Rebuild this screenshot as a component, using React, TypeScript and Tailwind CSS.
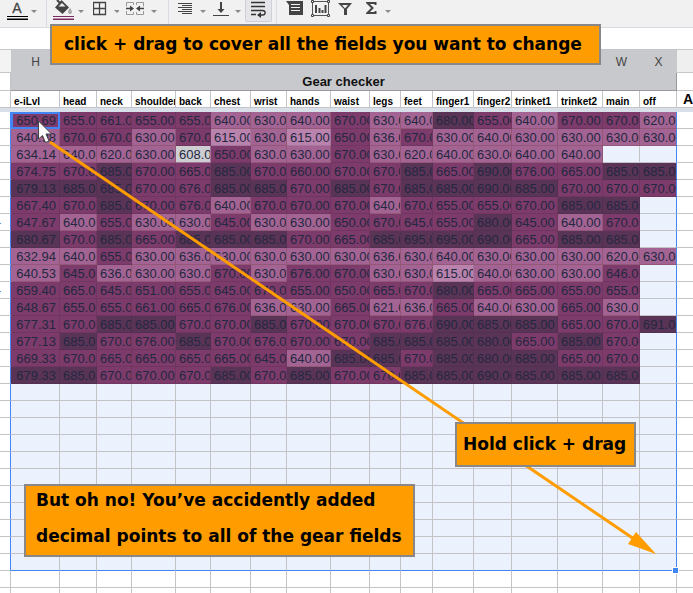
import type { ReactNode } from 'react'
import clsx from 'clsx'

const columns = [
    { label: 'e-iLvl', letter: 'H', width: 'w-[49px]' },
    { label: 'head', width: 'w-[37px]' },
    { label: 'neck', width: 'w-[35px]' },
    { label: 'shoulder', width: 'w-[44px]' },
    { label: 'back', width: 'w-[35px]' },
    { label: 'chest', width: 'w-[40px]' },
    { label: 'wrist', width: 'w-[36px]' },
    { label: 'hands', width: 'w-[44px]' },
    { label: 'waist', width: 'w-[39px]' },
    { label: 'legs', width: 'w-[31px]' },
    { label: 'feet', width: 'w-[32px]' },
    { label: 'finger1', width: 'w-[41px]' },
    { label: 'finger2', width: 'w-[38px]' },
    { label: 'trinket1', width: 'w-[46px]' },
    { label: 'trinket2', width: 'w-[45px]' },
    { label: 'main', letter: 'W', width: 'w-[37px]' },
    { label: 'off', letter: 'X', width: 'w-[37px]' },
]

const gear: number[][] = [
    [650.69, 655, 661, 655, 655, 640, 630, 640, 670, 630, 640, 680, 655, 640, 670, 670, 620],
    [640.98, 670, 670, 630, 670, 615, 630, 615, 650, 636, 670, 630, 640, 630, 630, 630, 630],
    [634.14, 640, 620, 630, 608, 650, 630, 630, 670, 630, 620, 640, 630, 640, 640],
    [674.75, 670, 685, 670, 665, 685, 670, 660, 670, 670, 685, 665, 690, 676, 665, 685, 685],
    [679.13, 685, 685, 670, 676, 685, 685, 670, 685, 670, 685, 685, 690, 685, 670, 670, 670],
    [667.4, 670, 685, 670, 676, 640, 670, 670, 670, 640, 670, 655, 655, 670, 685, 685],
    [647.67, 640, 655, 630, 630, 645, 630, 630, 650, 670, 645, 655, 680, 645, 640, 670],
    [680.67, 670, 685, 665, 685, 685, 685, 670, 665, 685, 695, 695, 690, 665, 685, 685],
    [632.94, 640, 655, 630, 636, 630, 630, 630, 630, 636, 630, 640, 630, 630, 630, 620, 630],
    [640.53, 645, 636, 630, 630, 670, 630, 676, 670, 630, 630, 615, 640, 630, 630, 646],
    [659.4, 665, 645, 651, 655, 645, 670, 655, 650, 665, 670, 680, 665, 665, 655, 655],
    [648.67, 655, 655, 661, 665, 676, 636, 630, 665, 621, 636, 665, 640, 630, 665, 630],
    [677.31, 670, 685, 685, 670, 670, 685, 670, 670, 670, 676, 690, 685, 685, 665, 670, 691],
    [677.13, 685, 670, 676, 685, 670, 676, 670, 670, 685, 685, 685, 680, 665, 685, 670],
    [669.33, 670, 665, 665, 665, 665, 645, 640, 685, 685, 670, 685, 680, 685, 665, 670],
    [679.33, 685, 670, 670, 670, 685, 670, 685, 670, 670, 685, 685, 690, 685, 685, 685],
]

const SELECTED_ROWS = 27
const rows = Array.from({ length: 29 }, (_, i) => gear[i] ?? [])

function cellColor(value?: number) {
    if (value === undefined) return 'bg-[#ebf2fe] border-[#c4c4c8]'
    if (value >= 679) return 'bg-[#5a3457] border-[#523052]'
    if (value >= 641) return 'bg-[#7c3b6a] border-[#703660]'
    if (value >= 620) return 'bg-[#a36494] border-[#935878]'
    if (value >= 610) return 'bg-[#b983ae] border-[#a5749a]'
    return 'bg-[#cdced2] border-[#a5749a]'
}

interface ToolProps {
    label: string
    className: string
    viewBox: string
    width: number
    children: ReactNode
}

function Tool({ label, className, viewBox, width, children }: ToolProps) {
    return (
        <button type="button" aria-label={label} className={clsx('shrink-0', className)}>
            <svg width={width} height={22} viewBox={viewBox} fill="none" className="block">
                {children}
            </svg>
        </button>
    )
}

function Caret({ x }: { x: number }) {
    return <path d={`M${x} 10h6l-3 3z`} fill="#8a8a8a" />
}

function Divider({ className }: { className: string }) {
    return <div className={clsx('h-full w-px shrink-0 bg-[#dadce4]', className)} />
}

function Toolbar() {
    return (
        <div className="flex h-7 shrink-0 items-start border-b border-[#d8dae2] bg-[#f1f1f1]">
            <Tool label="Text color" className="ml-[7px]" viewBox="0 0 32 22" width={32}>
                <text x="10" y="13" textAnchor="middle" fontSize="14" fontFamily="Liberation Sans, sans-serif" fill="#444" stroke="#444" strokeWidth="0.3">A</text>
                <path d="M0 16.5h21M0 19h21" stroke="#000" />
                <path d="M0 19.5h21" stroke="#000" />
                <Caret x={24} />
            </Tool>
            <Divider className="ml-[7px]" />
            <Tool label="Fill color" className="ml-[6px]" viewBox="0 0 32 22" width={32}>
                <path d="M4 0l4 4" stroke="#444" strokeWidth="2" />
                <path d="M8.500 0L16 7.500 9.500 14 2 7.500z" fill="#444" />
                <path d="M5.500 6.500L9 3l3.500 3.500z" fill="#f1f1f1" />
                <path d="M17 8c3 3.500 2 6 0 6s-3-2.500 0-6z" fill="#aaa" />
                <path d="M0 16.500h21M0 19.500h21" stroke="#7a2d60" />
                <path d="M0 19h21" stroke="#7a2d60" />
                <Caret x={25} />
            </Tool>
            <Tool label="Borders" className="ml-[8px]" viewBox="0 0 26 22" width={26}>
                <path d="M.5 2.500h12v12H.5zM6.500 2v13M0 8.500h13" stroke="#444" strokeWidth="1.300" />
                <Caret x={21} />
            </Tool>
            <Tool label="Merge cells" className="ml-[7px]" viewBox="0 0 32 22" width={32}>
                <path d="M7.500 5V2.500h-7v4M.5 11v3.500h7V12M10.500 5V2.500h7v4M17.500 11v3.500h-7V12" stroke="#999" />
                <path d="M0 8.500h5M18 8.500h-5" stroke="#444" strokeWidth="1.500" />
                <path d="M4 5.500l4 3-4 3zM14 5.500l-4 3 4 3z" fill="#444" />
                <Caret x={25} />
            </Tool>
            <Divider className="ml-[10px]" />
            <Tool label="Horizontal align" className="ml-[9px]" viewBox="0 0 30 22" width={30}>
                <path d="M0 3.500h14M4 5.500h10M0 7.500h14M4 9.500h10M0 11.500h14M4 13.500h10" stroke="#444" />
                <Caret x={22} />
            </Tool>
            <Tool label="Vertical align" className="ml-[5px]" viewBox="0 0 32 22" width={32}>
                <path d="M8 2v9" stroke="#444" strokeWidth="2" />
                <path d="M4.500 9h7L8 13z" fill="#444" />
                <path d="M0 15.500h16" stroke="#444" />
                <Caret x={22} />
            </Tool>
            <Tool label="Wrap text" className="h-[22px] w-[27px] rounded-b-xs border border-t-0 border-[#ccd0dc] bg-[#e6e6ea]" viewBox="0 0 25 22" width={25}>
                <path d="M5 2.500h14M5 6.500h14M5 10.500h11.500c3.500 0 3.500 4.500 0 4.500H13M5 14.500h5" stroke="#333" strokeWidth="1.300" />
                <path d="M15 12l-4 3 4 3z" fill="#333" />
            </Tool>
            <Divider className="ml-[4px]" />
            <Tool label="Insert comment" className="ml-[9px]" viewBox="0 0 17 22" width={17}>
                <path d="M0 1h17v14H3V5z" fill="#444" />
                <path d="M5 4.500h9M5 7.500h9M5 10.500h9" stroke="#f1f1f1" />
            </Tool>
            <Tool label="Insert chart" className="ml-[8px]" viewBox="0 0 19 22" width={19}>
                <path d="M2 1.500h15M2 15.500h15M1.500 2v13M17.500 2v13" stroke="#555" />
                <path d="M.5.5h2v2h-2zM16.500.5h2v2h-2zM.5 14.500h2v2h-2zM16.500 14.500h2v2h-2z" fill="#f1f1f1" stroke="#444" />
                <path d="M5 5v8M8.500 8v5M11.500 10v3M14.500 5v8" stroke="#444" strokeWidth="2" />
            </Tool>
            <Tool label="Filter" className="ml-[8px]" viewBox="0 0 15 22" width={15}>
                <path d="M0 3h14L9 9v6H6V9zM4 5l3 3.500L10 5z" fill="#444" fillRule="evenodd" />
            </Tool>
            <Tool label="Functions" className="ml-[13px]" viewBox="0 0 26 22" width={26}>
                <path d="M9.500 5V3H1.500l5 5-5 5h8v-2" stroke="#444" strokeWidth="2" />
                <Caret x={19} />
            </Tool>
        </div>
    )
}

function Sheet() {
    return (
        <table className="w-full table-fixed border-separate border-spacing-0 whitespace-nowrap text-[13px] leading-4">
            <colgroup>
                <col className="w-[11px]" />
                {columns.map((c) => (
                    <col key={c.label} className={c.width} />
                ))}
                <col />
            </colgroup>
            <thead>
                <tr className="h-6 text-[#444]">
                    <td className="border-t border-b border-[#c8c8cc] bg-[#f3f3f3]" />
                    {columns.map((c) => (
                        <th key={c.label} className="border-t border-[#c4c5c9] bg-[#c8c9cd] p-0 text-[12px] font-normal">
                            {c.letter}
                        </th>
                    ))}
                    <td className="border-t border-b border-[#c8c8cc] bg-[#efefef]" />
                </tr>
                <tr className="h-[18px]">
                    <td className="border-r border-b border-r-[#c4c4c8] border-b-[#c4c4c8]" />
                    <th colSpan={columns.length} className="border-r border-b border-[#999] bg-[#c8c9cd] p-0 pt-px text-[#111]">
                        Gear checker
                    </th>
                    <td className="border-b border-[#c4c4c8]" />
                </tr>
                <tr className="h-[17px]">
                    <td className="border-r border-b border-[#c4c4c8]" />
                    {columns.map((c) => (
                        <th key={c.label} className="overflow-hidden border-r border-b border-[#c4c4c8] p-0 pt-[6px] pl-[3px] text-left text-[10px] leading-[10px] text-black">
                            {c.label}
                        </th>
                    ))}
                    <th className="overflow-hidden border-b border-[#c4c4c8] p-0 pl-[6px] text-left text-[14px] text-black">A</th>
                </tr>
                <tr className="h-1">
                    <td colSpan={columns.length + 2} className="bg-[#d9dfe9] p-0" />
                </tr>
            </thead>
            <tbody className="leading-[14px]">
                {rows.map((row, r) => {
                    const selected = r < SELECTED_ROWS
                    const lastSelected = r === SELECTED_ROWS - 1
                    return (
                        <tr key={r} className="h-[17px]">
                            <td className={clsx('overflow-hidden border-r border-b border-b-[#c4c4c8] p-0 pt-[2px] -indent-[3px] text-[#3b78d8]', selected ? 'border-r-[#4285f4]' : 'border-r-[#c4c4c8]')}>
                                {(r === 6 || r === 10) && '-'}
                            </td>
                            {columns.map((c, i) => (
                                <td
                                    key={c.label}
                                    className={clsx(
                                        'border-r border-b p-0 pt-[2px] text-[#242840]',
                                        i === 0 ? 'pr-[3px] text-right' : 'pl-[3px]',
                                        selected ? cellColor(row[i]) : 'border-[#c4c4c8]',
                                        lastSelected && 'border-b-[#4285f4]',
                                        selected && i === columns.length - 1 && 'border-r-[#4285f4]',
                                        r === 0 && i === 0 && 'outline-2 -outline-offset-2 outline-[#4285f4]',
                                        lastSelected && i === columns.length - 1 ? 'relative' : 'overflow-hidden',
                                    )}
                                >
                                    {row[i]?.toFixed(2)}
                                    {lastSelected && i === columns.length - 1 && (
                                        <span className="absolute -right-[3px] -bottom-[4px] size-[7px] border border-white bg-[#4285f4]" />
                                    )}
                                </td>
                            ))}
                            <td className="border-b border-[#c4c4c8] p-0" />
                        </tr>
                    )
                })}
            </tbody>
        </table>
    )
}

function Callout({ className, children }: { className: string; children: ReactNode }) {
    return (
        <div className={clsx("absolute border-2 border-[#888] bg-[#ff9c00] font-['DejaVu_Sans',sans-serif] text-[17px] font-bold whitespace-nowrap text-black", className)}>
            {children}
        </div>
    )
}

export default function App() {
    return (
        <div className="relative flex h-screen flex-col overflow-hidden bg-white font-['Liberation_Sans',Arial,sans-serif]">
            <Toolbar />
            <div className="h-[21px] shrink-0" />
            <Sheet />

            <svg className="pointer-events-none absolute top-0 left-0" width={693} height={593} viewBox="0 0 693 593">
                <path d="M50 142L634 539" stroke="#ff9c00" strokeWidth="3" />
                <path d="M656 554L636 532L628 544z" fill="#ff9c00" />
                <path d="M38.500 121v18l4-3.500 3 7 3.500-1.500-3-7h5.500z" fill="#fff" stroke="#444" />
            </svg>

            <Callout className="top-6 left-[50px] pr-[17px] pl-3 leading-[37px]">
                click + drag to cover all the fields you want to change
            </Callout>
            <Callout className="top-[422px] left-[455px] pr-2 pl-[6px] py-[2px] leading-[37px]">
                Hold click + drag
            </Callout>
            <Callout className="top-[484px] left-6 pr-[11px] pl-[10px] pb-[5px] leading-7">
                <p>But oh no! You’ve accidently added</p>
                <p className="mt-2">decimal points to all of the gear fields</p>
            </Callout>
        </div>
    )
}
